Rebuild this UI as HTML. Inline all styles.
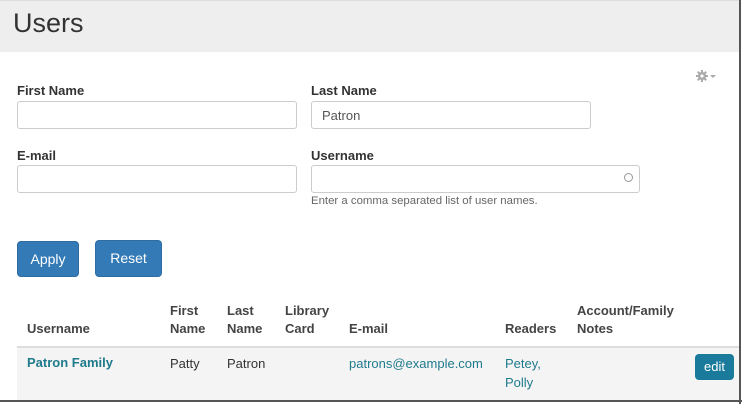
<!DOCTYPE html>
<html><head><style>
body{margin:0;width:742px;height:404px;overflow:hidden;background:#fff;font-family:"Liberation Sans",sans-serif;color:#333;position:relative}
.a{position:absolute}
.hdr{left:0;top:0;width:740px;height:51px;background:#eee;border-top:1px solid #ddd}
.hdr h1{margin:0;position:absolute;left:13px;top:7px;font-size:27px;font-weight:normal;color:#333}
.lbl{font-size:13px;font-weight:bold;color:#333}
.inp{border:1px solid #ccc;border-radius:3px;height:26px;background:#fff;box-sizing:border-box}
.btn{background:#337ab7;border:1px solid #2e6da4;border-radius:4px;color:#fff;font-size:14px;text-align:center;box-sizing:border-box}
.th{font-size:13px;font-weight:bold;color:#444;line-height:18px}
.td{font-size:13px;line-height:19px}
.lk{color:#1f7a8c}
</style></head><body>
<div class="a hdr"><h1>Users</h1></div>
<div class="a" style="left:739px;top:0;width:2px;height:404px;background:#555"></div>
<div class="a" style="left:0;top:400px;width:742px;height:2px;background:#555"></div>
<svg class="a" style="left:696px;top:69px" width="22" height="14" viewBox="0 0 22 14"><g fill="#aaa"><circle cx="6" cy="7" r="4"/><rect x="5" y="1" width="2" height="12"/><rect x="0" y="6" width="12" height="2"/><rect x="5" y="1" width="2" height="12" transform="rotate(45 6 7)"/><rect x="5" y="1" width="2" height="12" transform="rotate(-45 6 7)"/></g><circle cx="6" cy="7" r="1.6" fill="#fff"/><path d="M14 6h6l-3 3z" fill="#aaa"/></svg>
<div class="a lbl" style="left:17px;top:83px">First Name</div>
<div class="a inp" style="left:17px;top:101px;width:280px;height:28px"></div>
<div class="a lbl" style="left:311px;top:83px">Last Name</div>
<div class="a inp" style="left:311px;top:101px;width:280px;height:28px;font-size:13px;padding:6px 10px;color:#555">Patron</div>
<div class="a lbl" style="left:17px;top:148px">E-mail</div>
<div class="a inp" style="left:17px;top:165px;width:280px;height:28px"></div>
<div class="a lbl" style="left:311px;top:148px">Username</div>
<div class="a inp" style="left:311px;top:165px;width:329px;height:28px"></div>
<div class="a" style="left:624px;top:173px;width:7px;height:7px;border:1.5px solid #999;border-radius:50%"></div>
<div class="a" style="left:311px;top:195px;font-size:11.4px;color:#666">Enter a comma separated list of user names.</div>
<div class="a btn" style="left:17px;top:241px;width:62px;height:36px;line-height:34px">Apply</div>
<div class="a btn" style="left:95px;top:240px;width:67px;height:37px;line-height:34px">Reset</div>
<div class="a th" style="left:27px;top:320px">Username</div>
<div class="a th" style="left:170px;top:302px">First<br>Name</div>
<div class="a th" style="left:227px;top:302px">Last<br>Name</div>
<div class="a th" style="left:285px;top:302px">Library<br>Card</div>
<div class="a th" style="left:349px;top:320px">E-mail</div>
<div class="a th" style="left:505px;top:320px">Readers</div>
<div class="a th" style="left:577px;top:302px">Account/Family<br>Notes</div>
<div class="a" style="left:17px;top:346px;width:722px;height:52px;background:#f4f4f4;border-top:2px solid #ddd"></div>
<div class="a td lk" style="left:27px;top:353px;font-weight:bold">Patron Family</div>
<div class="a td" style="left:170px;top:354px">Patty</div>
<div class="a td" style="left:227px;top:354px">Patron</div>
<div class="a td lk" style="left:349px;top:354px">patrons@example.com</div>
<div class="a td lk" style="left:505px;top:354px">Petey,<br>Polly</div>
<div class="a" style="left:695px;top:354px;width:39px;height:26px;background:#1a7a9b;border-radius:4px;color:#fff;font-size:13px;line-height:26px;text-align:center">edit</div>
</body></html>
